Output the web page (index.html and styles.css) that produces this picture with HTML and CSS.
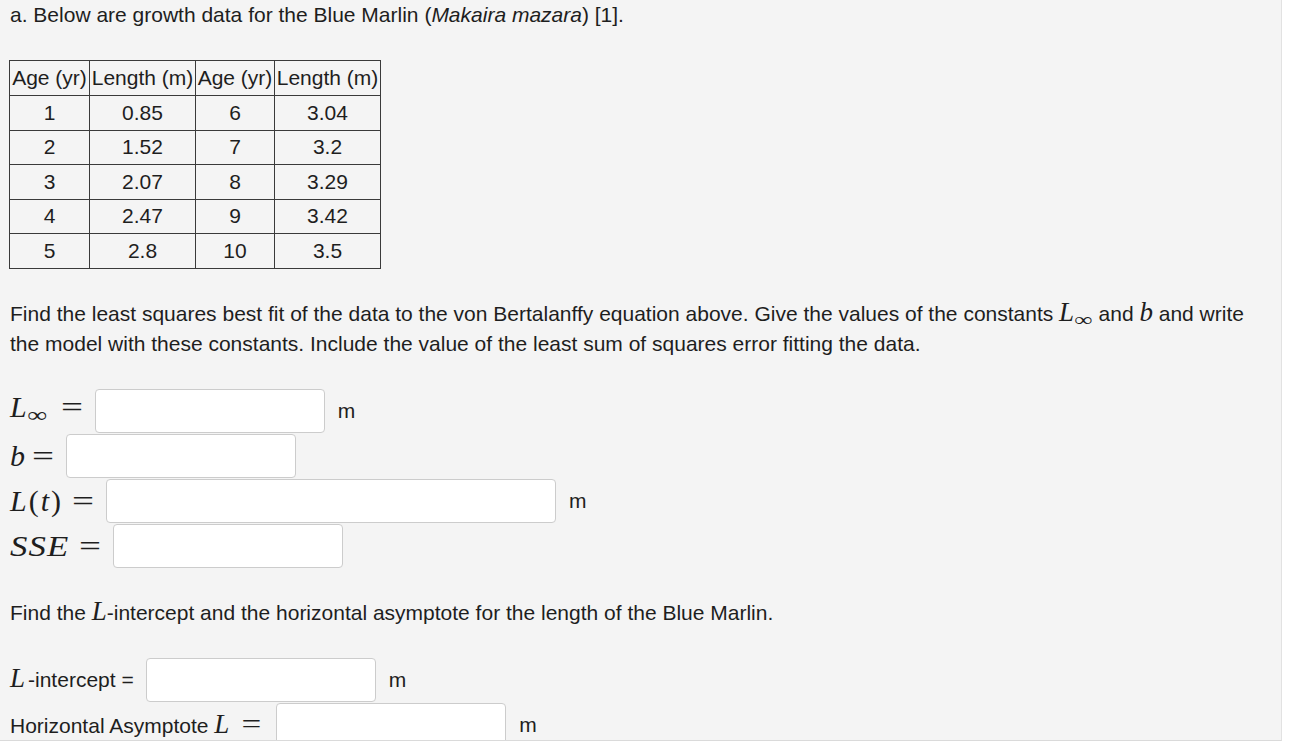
FILE: index.html
```html
<!DOCTYPE html>
<html>
<head>
<meta charset="utf-8">
<link rel="stylesheet" href="styles.css">
</head>
<body>
<div class="panel">
  <p class="title">a. Below are growth data for the Blue Marlin (<i>Makaira mazara</i>) [1].</p>
  <table class="data">
    <tr><td class="c1">Age (yr)</td><td class="c2">Length (m)</td><td class="c3">Age (yr)</td><td class="c4">Length (m)</td></tr>
    <tr><td>1</td><td>0.85</td><td>6</td><td>3.04</td></tr>
    <tr><td>2</td><td>1.52</td><td>7</td><td>3.2</td></tr>
    <tr><td>3</td><td>2.07</td><td>8</td><td>3.29</td></tr>
    <tr><td>4</td><td>2.47</td><td>9</td><td>3.42</td></tr>
    <tr><td>5</td><td>2.8</td><td>10</td><td>3.5</td></tr>
  </table>
  <p class="para">Find the least squares best fit of the data to the von Bertalanffy equation above. Give the values of the constants <span class="mi"><span class="ml">L</span><span class="isub">∞</span></span> and <span class="mi">b</span> and write the model with these constants. Include the value of the least sum of squares error fitting the data.</p>
  <div class="answers">
    <div class="row"><span class="dmath"><i class="ls3">L</i><span class="dsub">∞</span><span class="eq">=</span></span><span class="box"></span><span class="unit">m</span></div>
    <div class="row"><span class="dmath"><i class="vb">b</i><span class="eq">=</span></span><span class="box"></span></div>
    <div class="row"><span class="dmath ls2"><i>L</i>(<i>t</i>)<span class="eq">=</span></span><span class="box wide"></span><span class="unit">m</span></div>
    <div class="row"><span class="dmath"><i class="wide-id">SSE</i><span class="eq">=</span></span><span class="box"></span></div>
  </div>
  <p class="para second">Find the <span class="mi">L</span>-intercept and the horizontal asymptote for the length of the Blue Marlin.</p>
  <div class="answers lower">
    <div class="row"><span class="lbl"><span class="mi ml3">L</span>-intercept =</span><span class="box"></span><span class="unit">m</span></div>
    <div class="row"><span class="lbl">Horizontal Asymptote <span class="mi">L</span><span class="ieq">=</span></span><span class="box"></span><span class="unit">m</span></div>
  </div>
</div>
</body>
</html>
```
FILE: styles.css
```css
html, body {
  margin: 0;
  padding: 0;
  background: #ffffff;
}
body {
  font-family: "Liberation Sans", Arial, sans-serif;
  font-size: 21px;
  color: #1e1e1e;
}
.panel {
  width: 1282px;
  height: 741px;
  box-sizing: border-box;
  padding: 3px 9px 0 9px;
  background: #f4f4f4;
  border-right: 1px solid #e2e2e2;
  border-bottom: 1px solid #dadada;
  overflow: hidden;
}
.title {
  margin: 0 0 0 1px;
  line-height: 24px;
}
.data {
  margin-top: 33px;
  border-collapse: collapse;
  border: 1px solid #3a3a3a;
}
.data td {
  border: 1px solid #3a3a3a;
  text-align: center;
  padding: 0 1px;
  height: 33.5px;
  line-height: 22px;
}
.data tr:first-child td {
  height: 34px;
}
.c1 { width: 77px; }
.c2 { width: 103px; }
.c3 { width: 76px; }
.c4 { width: 103px; }
.para {
  margin: 30px 0 0 1px;
  line-height: 30px;
  width: 1250px;
}
.mi {
  font-family: "Liberation Serif", "Times New Roman", serif;
  font-style: italic;
  font-size: 27px;
  line-height: 0;
}
.ml {
  letter-spacing: 2px;
}
.ml3 {
  letter-spacing: 3px;
}
.isub {
  display: inline-block;
  font-style: normal;
  font-size: 19px;
  transform: scaleX(1.35);
  transform-origin: left center;
  vertical-align: -5px;
  margin-left: -2px;
  margin-right: 5px;
}
.answers {
  margin-top: 30px;
  display: flex;
  flex-direction: column;
  gap: 1px;
}
.row {
  display: flex;
  align-items: center;
  gap: 12px;
  height: 44px;
}
.dmath {
  font-family: "Liberation Serif", "Times New Roman", serif;
  font-size: 30px;
  padding-left: 1px;
  white-space: nowrap;
  line-height: 40px;
}
.dmath i {
  font-style: italic;
}
.ls2 { letter-spacing: 2px; }
.ls3 { letter-spacing: 3px; }
.vb { margin-right: -2px; }
.dmath i.wide-id {
  display: inline-block;
  letter-spacing: 1px;
  transform: scaleX(1.16);
  transform-origin: left center;
  margin-right: 9px;
}
.dsub {
  display: inline-block;
  font-size: 21px;
  transform: scaleX(1.35);
  transform-origin: left center;
  vertical-align: -5px;
  margin-left: -3px;
  margin-right: 10px;
}
.eq {
  display: inline-block;
  width: 22px;
  margin-left: 9px;
  text-align: center;
  font-style: normal;
  letter-spacing: 0;
  transform: scaleX(1.3);
}
.box {
  width: 228px;
  height: 42px;
  background: #ffffff;
  border: 1px solid #cccccc;
  border-radius: 4px;
  flex: none;
}
.box.wide {
  width: 448px;
}
.unit {
  margin-left: 1px;
}
.para.second {
  margin-top: 30px;
}
.lower {
  margin-top: 30px;
}
.lbl {
  padding-left: 1px;
  white-space: nowrap;
}
.ieq {
  display: inline-block;
  font-family: "Liberation Serif", "Times New Roman", serif;
  font-size: 27px;
  width: 21px;
  text-align: center;
  margin-left: 12px;
  margin-right: 2px;
  transform: scaleX(1.3);
}
```
